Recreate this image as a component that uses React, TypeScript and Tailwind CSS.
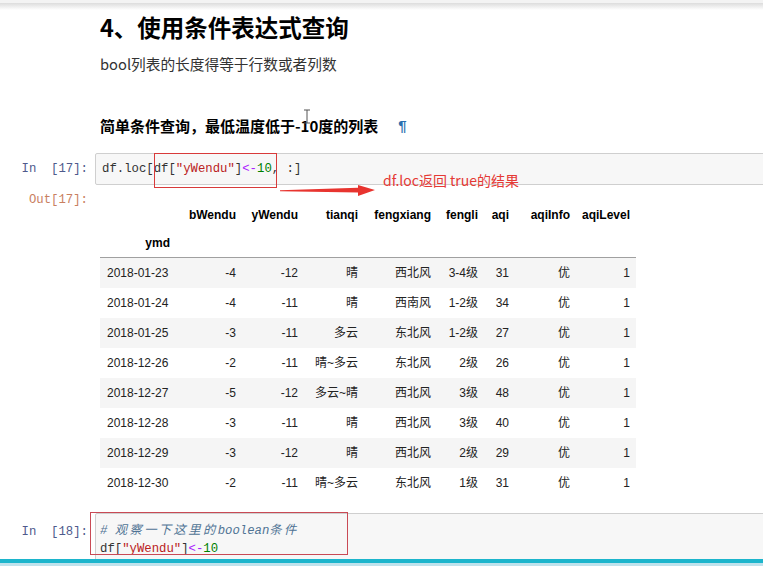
import React from "react";

const SANS = "font-['Liberation_Sans','Noto_Sans_CJK_SC',sans-serif]";
const CJK = "font-['Noto_Sans_CJK_SC','Liberation_Sans',sans-serif]";
const MONO = "font-['Liberation_Mono','Noto_Sans_CJK_SC',monospace]";

const COLS = ["bWendu", "yWendu", "tianqi", "fengxiang", "fengli", "aqi", "aqiInfo", "aqiLevel"];
const COL_W = ["w-[76px]", "w-[66px]", "w-[62px]", "w-[60px]", "w-[73px]", "w-[47px]", "w-[31px]", "w-[61px]", "w-[60px]"];

const ROWS: string[][] = [
  ["2018-01-23", "-4", "-12", "晴", "西北风", "3-4级", "31", "优", "1"],
  ["2018-01-24", "-4", "-11", "晴", "西南风", "1-2级", "34", "优", "1"],
  ["2018-01-25", "-3", "-11", "多云", "东北风", "1-2级", "27", "优", "1"],
  ["2018-12-26", "-2", "-11", "晴~多云", "东北风", "2级", "26", "优", "1"],
  ["2018-12-27", "-5", "-12", "多云~晴", "西北风", "3级", "48", "优", "1"],
  ["2018-12-28", "-3", "-11", "晴", "西北风", "3级", "40", "优", "1"],
  ["2018-12-29", "-3", "-12", "晴", "西北风", "2级", "29", "优", "1"],
  ["2018-12-30", "-2", "-11", "晴~多云", "东北风", "1级", "31", "优", "1"],
];

function Prompt({ kind, n, className = "" }: { kind: "In" | "Out"; n: number; className?: string }) {
  return (
    <div
      className={`w-[88px] shrink-0 text-right ${MONO} text-[12.3px] ${
        kind === "In" ? "text-[#4e5a8c]" : "text-[#c9805f]"
      } ${className}`}
    >
      {kind === "In" ? `In\u00a0 [${n}]:` : `Out[${n}]:`}
    </div>
  );
}

function Wide({ children }: { children: React.ReactNode }) {
  return <span className="tracking-[2.4px]">{children}</span>;
}

export default function App() {
  return (
    <div className={`relative w-[763px] h-[566px] overflow-hidden bg-white ${SANS}`}>
      {/* toolbar shadow */}
      <div className="h-[3px] bg-[#f3f3f3]" />
      <div className="h-[7px] bg-gradient-to-b from-[#dcdcdc] to-white" />

      {/* markdown cell */}
      <div className="pl-[100px]">
        <h1 className={`mt-[1px] ${CJK} text-[23.5px] leading-[32px] font-bold text-black`}>
          4、使用条件表达式查询
        </h1>
        <p className={`mt-[10px] ${CJK} text-[14.7px] leading-[22px] text-[#333]`}>
          bool列表的长度得等于行数或者列数
        </p>
        <div className="relative mt-[40px] flex items-center">
          <h4 className={`${CJK} text-[15px] leading-[22px] font-bold text-black`}>
            简单条件查询，最低温度低于-10度的列表
          </h4>
          <span className="ml-[20px] text-[15px] font-bold text-[#2b6fae]">¶</span>
          {/* mouse cursor */}
          <svg className="absolute left-[203px] top-[-6px]" width="8" height="15" viewBox="0 0 8 15">
            <path d="M1 1h6M4 1v13M1 14h6" stroke="#555" strokeWidth="1" fill="none" />
          </svg>
        </div>
      </div>

      {/* code cell 17 */}
      <div className="relative mt-[15px] flex">
        <Prompt kind="In" n={17} className="pt-[7px] leading-[18px]" />
        <div className="relative ml-[7px] mr-[-4px] h-[32px] flex-1 rounded-[2px] border border-[#cfcfcf] bg-[#f7f7f7] pl-[6px] pt-[6px]">
          <pre className={`${MONO} text-[12.3px] leading-[18px] text-[#333]`}>
            df.loc[df[<span className="text-[#ba2121]">"yWendu"</span>]
            <span className="text-[#aa22ff]">&lt;-</span>
            <span className="text-[#008000]">10</span>, :]
          </pre>
          <div className="absolute left-[58px] top-[-1px] h-[35px] w-[123px] border border-[#d83a3a]" />
        </div>
        {/* annotation */}
        <svg className="absolute left-[278px] top-[29px]" width="100" height="18" viewBox="0 0 100 18">
          <polygon points="2,8.2 80,5.8 80,3 97,8 80,14 80,10.6 2,9.2" fill="#e8342f" />
        </svg>
        <span className={`absolute left-[383px] top-[18px] ${CJK} text-[14px] leading-[18px] text-[#e53935]`}>
          df.loc返回 true的结果
        </span>
      </div>

      {/* output 17 */}
      <div className="flex">
        <Prompt kind="Out" n={17} className="pt-[5px] leading-[20px]" />
        <table className="ml-[12px] mt-[16px] w-[536px] table-fixed border-collapse text-[12px] text-[#222]">
          <colgroup>
            {COL_W.map((w, i) => (
              <col key={i} className={w} />
            ))}
          </colgroup>
          <thead>
            <tr className="h-[29px]">
              <th />
              {COLS.map((c) => (
                <th key={c} className="pr-[6px] text-right font-bold text-black">
                  {c}
                </th>
              ))}
            </tr>
            <tr className="h-[28px] border-b border-[#a0a0a0]">
              <th className="pr-[6px] text-right font-bold text-black">ymd</th>
              {COLS.map((c) => (
                <th key={c} />
              ))}
            </tr>
          </thead>
          <tbody>
            {ROWS.map((r, i) => (
              <tr key={r[0]} className={`h-[30px] ${i % 2 === 0 ? "bg-[#f5f5f5]" : "bg-white"}`}>
                {r.map((v, j) => (
                  <td key={j} className={`pr-[6px] whitespace-nowrap ${j === 0 ? "text-left pl-[7px]" : "text-right"}`}>
                    {v}
                  </td>
                ))}
              </tr>
            ))}
          </tbody>
        </table>
      </div>

      {/* code cell 18 */}
      <div className="mt-[15px] flex">
        <Prompt kind="In" n={18} className="pt-[10px] leading-[18px]" />
        <div className="relative ml-[7px] mr-[-4px] h-[60px] flex-1 rounded-[2px] border border-[#cfcfcf] bg-[#f7f7f7] pl-[4px] pt-[8px]">
          <pre className={`${MONO} text-[12.3px] leading-[18px] text-[#333]`}>
            <span className="italic text-[#4f7394]">
              # <Wide>观察一下这里的</Wide>boolean<Wide>条件</Wide>
            </span>
            {"\n"}df[<span className="text-[#ba2121]">"yWendu"</span>]
            <span className="text-[#aa22ff]">&lt;-</span>
            <span className="text-[#008000]">10</span>
          </pre>
          <div className="absolute left-[-6px] top-[-2px] h-[43px] w-[258px] border border-[#c94a55]" />
        </div>
      </div>

      {/* player progress bar */}
      <div className="absolute bottom-0 left-0 right-0">
        <div className="h-[4px] bg-[#1cb5cc]" />
        <div className="h-[3px] bg-[#bfe2ec]" />
      </div>
    </div>
  );
}
